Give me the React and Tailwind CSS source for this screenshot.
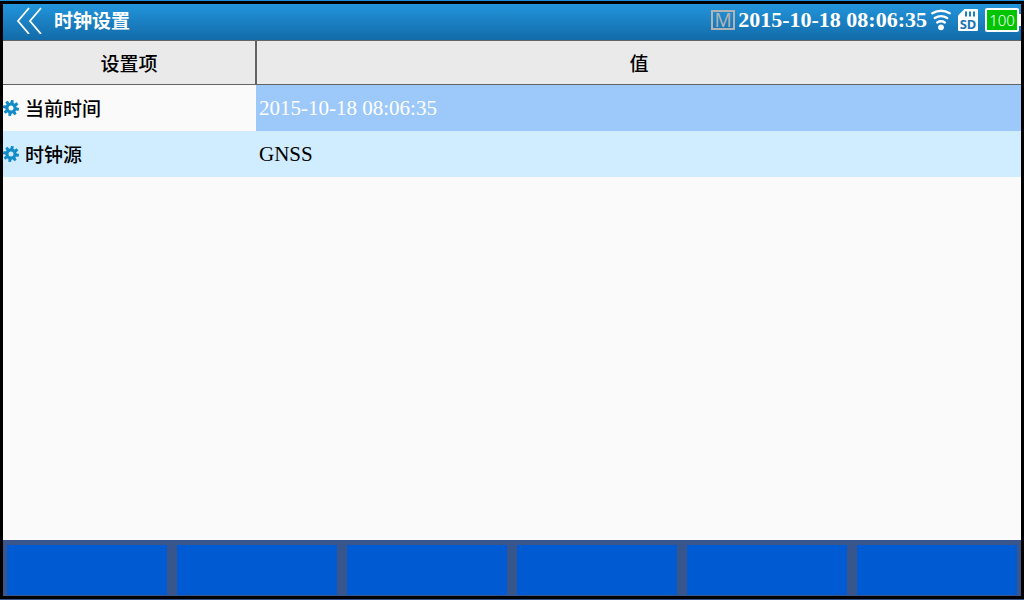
import React, { useState } from "react";

const settings = [
  { name: "当前时间", value: "2015-10-18 08:06:35" },
  { name: "时钟源", value: "GNSS" },
];

const softKeys = ["F1", "F2", "F3", "F4", "F5", "F6"];

const GearIcon = () => (
  <svg viewBox="0 0 16 16" className="h-4 w-4 shrink-0" aria-hidden="true">
    <g fill="#138bc9">
      {[0, 45, 90, 135, 180, 225, 270, 315].map((angle) => (
        <path
          key={angle}
          d="M6.2 4 6.7 0h2.6L9.8 4z"
          transform={`rotate(${angle + 10} 8 8)`}
        />
      ))}
    </g>
    <circle cx="8" cy="8" r="4" fill="none" stroke="#138bc9" strokeWidth="3" />
  </svg>
);

const WifiIcon = () => (
  <svg viewBox="0 0 20 22" className="h-[22px] w-5" aria-hidden="true">
    <g fill="none" stroke="#fff" strokeWidth="2.4" strokeLinecap="round">
      <path d="M1.3 4.2Q10 -0.6 18.7 4.2" />
      <path d="M3.8 9Q10 5.2 16.2 9" />
      <path d="M6.2 13.4Q10 11 13.8 13.4" />
    </g>
    <circle cx="10" cy="18.3" r="2.9" fill="#fff" />
  </svg>
);

const SdCardIcon = () => (
  <svg viewBox="0 0 20 22" className="h-[22px] w-5 overflow-visible" aria-hidden="true">
    <path d="M6.5 0H19a1 1 0 0 1 1 1v20a1 1 0 0 1-1 1H1a1 1 0 0 1-1-1V6.5z" fill="#fff" />
    <path d="M8 2.5v5M12 2.5v5M16 2.5v5" stroke="#1a7fc0" strokeWidth="2" />
    <text
      x="10"
      y="20"
      textAnchor="middle"
      className="fill-[#1a75b5] font-['Noto_Sans'] text-[13px] font-bold"
    >
      SD
    </text>
  </svg>
);

const App = () => {
  const [selected, setSelected] = useState(0);

  return (
    <div className="flex min-h-screen flex-col border-t border-b border-t-[#1f90d6] border-b-[#38558c] bg-black p-[3px] font-['Liberation_Serif','Noto_Sans_CJK_SC',serif] text-black">
      {/* Title bar */}
      <header className="flex h-9 items-center justify-between bg-linear-to-b from-[#2395dc] to-[#126ba8] pb-1 text-white">
        <div className="flex items-center pl-3">
          <button type="button" aria-label="返回" className="mr-[11px]">
            <svg viewBox="0 0 28 28" className="h-7 w-7" aria-hidden="true">
              <path
                d="M14 2 3 15l11 13M26 2l-11 13 11 13"
                fill="none"
                stroke="#fff"
                strokeWidth="1.8"
              />
            </svg>
          </button>
          <h1 className="font-['Noto_Sans_CJK_SC',sans-serif] text-[19px] leading-7 font-bold">
            时钟设置
          </h1>
        </div>

        {/* Status icons */}
        <div className="flex items-center">
          <span className="mr-[3px] flex h-5 w-6 items-center justify-center border-2 border-[#b3b3b3] font-['Noto_Sans',sans-serif] text-[19px] leading-4 text-[#b3b3b3]">
            M
          </span>
          <time className="mr-1 text-[22px] leading-7 font-bold">
            2015-10-18 08:06:35
          </time>
          <div className="mr-[7px] flex gap-[7px]">
            <WifiIcon />
            <SdCardIcon />
          </div>
          <div className="flex items-center">
            <span className="flex h-6 w-[34px] items-center justify-center rounded-xs border-2 border-white bg-[#00c400] font-['Noto_Sans',sans-serif] text-[15px] leading-5 font-light">
              100
            </span>
            <span className="h-3 w-[2px] bg-white" />
          </div>
        </div>
      </header>

      {/* Settings table */}
      <main className="grow bg-[#fafafa]">
        <table className="w-full table-fixed border-collapse text-left text-[21px] leading-7">
          <thead className="bg-[#eaeaea] font-['Noto_Sans_CJK_SC',sans-serif] text-[19px]">
            <tr className="h-11 border-t border-b border-[#646464]">
              <th className="w-[253px] border-r-2 border-[#646464] text-center font-medium">
                设置项
              </th>
              <th className="text-center font-medium">值</th>
            </tr>
          </thead>
          <tbody>
            {settings.map((item, index) => (
              <tr
                key={item.name}
                onClick={() => setSelected(index)}
                className={index % 2 ? "h-[46px] bg-[#d0ecff]" : "h-[46px]"}
              >
                <th
                  scope="row"
                  className="font-['Noto_Sans_CJK_SC',sans-serif] text-[19px] font-medium"
                >
                  <span className="flex items-center gap-[6px]">
                    <GearIcon />
                    {item.name}
                  </span>
                </th>
                <td
                  className={
                    index === selected
                      ? "bg-[#9dc9fa] pl-[3px] text-white"
                      : "pl-[3px]"
                  }
                >
                  {item.value}
                </td>
              </tr>
            ))}
          </tbody>
        </table>
      </main>

      {/* Soft keys */}
      <footer className="grid grid-cols-6 gap-[10px] bg-[#38558c] px-1 pt-[5px] pb-px">
        {softKeys.map((key) => (
          <button
            key={key}
            type="button"
            aria-label={key}
            className="h-[50px] bg-[#005ad2] active:bg-[#004cb2]"
          />
        ))}
      </footer>
    </div>
  );
};

export default App;
